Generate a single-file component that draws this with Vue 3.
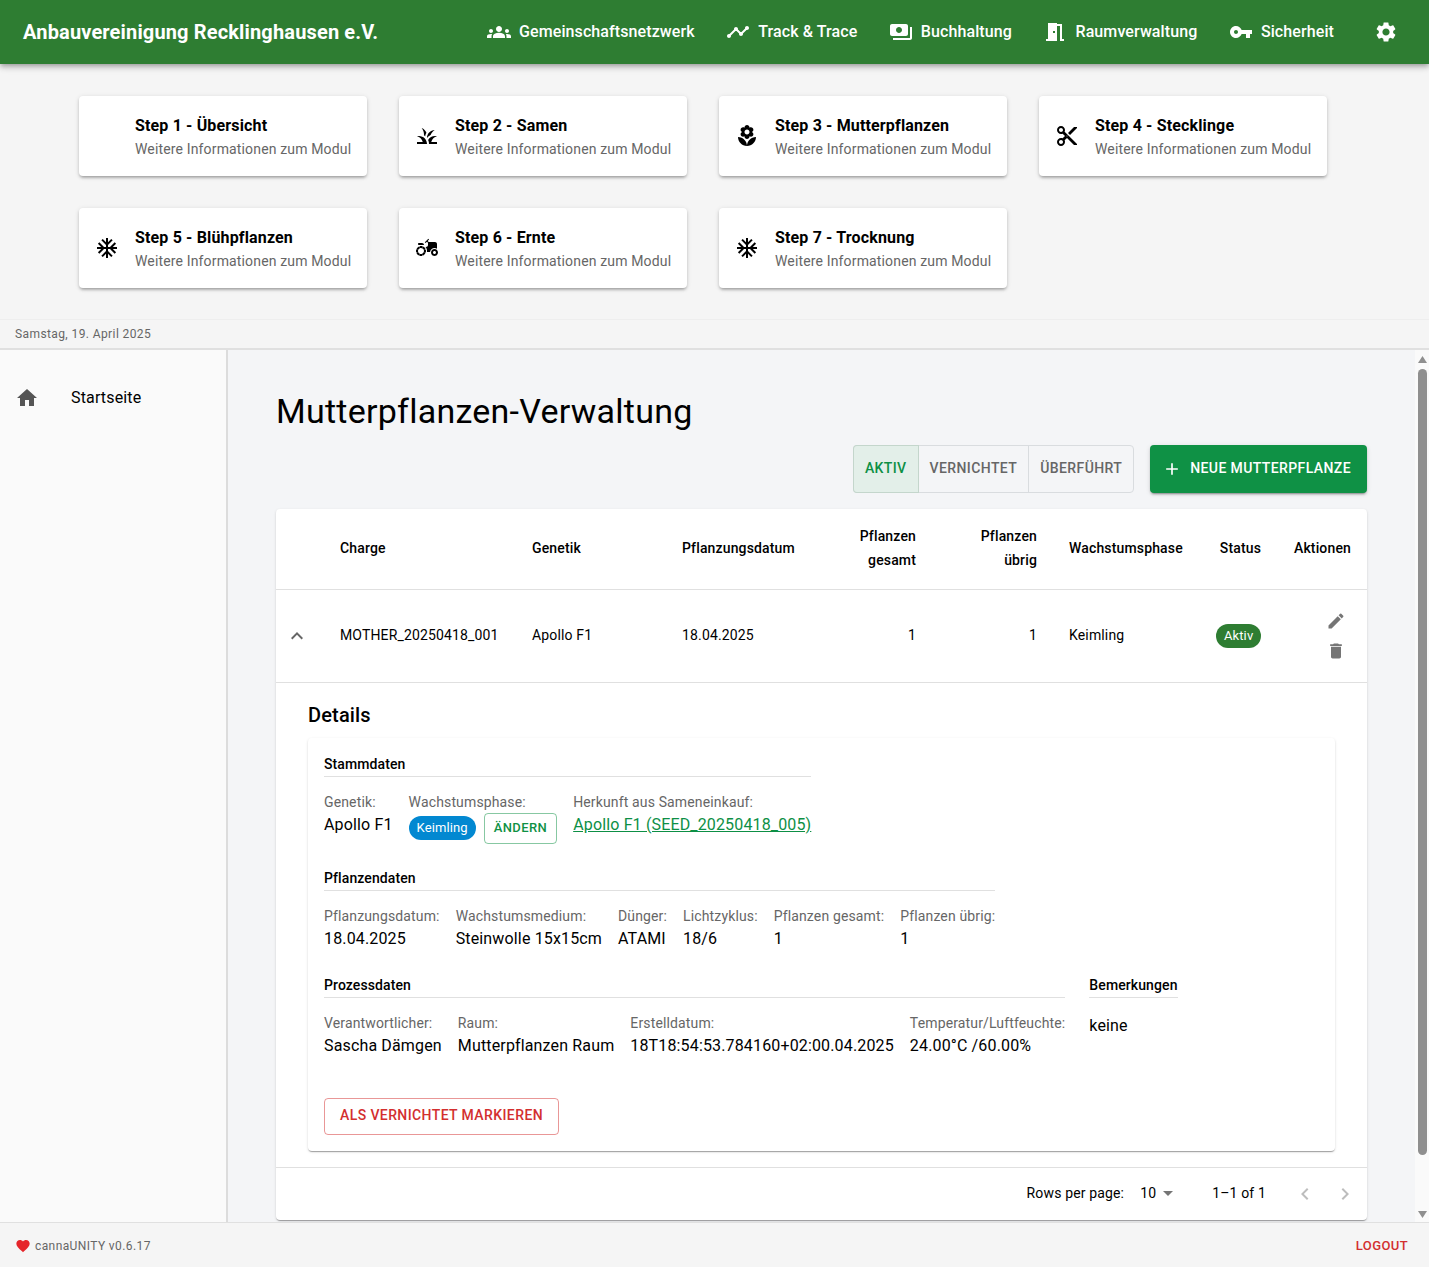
<script setup>
const icons = {
  groups: 'M12 12.75c1.63 0 3.07.39 4.24.9 1.08.48 1.76 1.56 1.76 2.73V18H6v-1.61c0-1.18.68-2.26 1.76-2.73 1.17-.52 2.61-.91 4.24-.91zM4 13c1.1 0 2-.9 2-2s-.9-2-2-2-2 .9-2 2 .9 2 2 2zm1.13 1.1c-.37-.06-.74-.1-1.13-.1-.99 0-1.93.21-2.78.58C.48 14.9 0 15.62 0 16.43V18h4.5v-1.61c0-.83.23-1.61.63-2.29zM20 13c1.1 0 2-.9 2-2s-.9-2-2-2-2 .9-2 2 .9 2 2 2zm4 3.43c0-.81-.48-1.53-1.22-1.85-.85-.37-1.79-.58-2.78-.58-.39 0-.76.04-1.13.1.4.68.63 1.46.63 2.29V18H24v-1.57zM12 6c1.66 0 3 1.34 3 3s-1.34 3-3 3-3-1.34-3-3 1.34-3 3-3z',
  timeline: 'M23 8c0 1.1-.9 2-2 2-.18 0-.35-.02-.51-.07l-3.56 3.55c.05.16.07.34.07.52 0 1.1-.9 2-2 2s-2-.9-2-2c0-.18.02-.36.07-.52l-2.55-2.55c-.16.05-.34.07-.52.07s-.36-.02-.52-.07l-4.55 4.56c.05.16.07.33.07.51 0 1.1-.9 2-2 2s-2-.9-2-2 .9-2 2-2c.18 0 .35.02.51.07l4.56-4.55C8.02 9.36 8 9.18 8 9c0-1.1.9-2 2-2s2 .9 2 2c0 .18-.02.36-.07.52l2.55 2.55c.16-.05.34-.07.52-.07s.36.02.52.07l3.55-3.56C19.02 8.35 19 8.18 19 8c0-1.1.9-2 2-2s2 .9 2 2z',
  payments: 'M19 14V6c0-1.1-.9-2-2-2H3c-1.1 0-2 .9-2 2v8c0 1.1.9 2 2 2h14c1.1 0 2-.9 2-2zm-9-1c-1.66 0-3-1.34-3-3s1.34-3 3-3 3 1.34 3 3-1.34 3-3 3zm13-6v11c0 1.1-.9 2-2 2H4v-2h17V7h2z',
  room: 'M14 6v15H3v-2h2V3h9v1h5v15h2v2h-4V6h-3zm-4 5v2h2v-2h-2z',
  key: 'M12.65 10C11.83 7.67 9.61 6 7 6c-3.31 0-6 2.69-6 6s2.69 6 6 6c2.61 0 4.83-1.67 5.65-4H17v4h4v-4h2v-4H12.65zM7 14c-1.1 0-2-.9-2-2s.9-2 2-2 2 .9 2 2-.9 2-2 2z',
  settings: 'M19.14 12.94c.04-.3.06-.61.06-.94 0-.32-.02-.64-.07-.94l2.03-1.58c.18-.14.23-.41.12-.61l-1.92-3.32c-.12-.22-.37-.29-.59-.22l-2.39.96c-.5-.38-1.03-.7-1.62-.94l-.36-2.54c-.04-.24-.24-.41-.48-.41h-3.84c-.24 0-.43.17-.47.41l-.36 2.54c-.59.24-1.13.57-1.62.94l-2.39-.96c-.22-.08-.47 0-.59.22L2.74 8.87c-.12.21-.08.47.12.61l2.03 1.58c-.05.3-.09.63-.09.94s.02.64.07.94l-2.03 1.58c-.18.14-.23.41-.12.61l1.92 3.32c.12.22.37.29.59.22l2.39-.96c.5.38 1.03.7 1.62.94l.36 2.54c.05.24.24.41.48.41h3.84c.24 0 .44-.17.47-.41l.36-2.54c.59-.24 1.13-.56 1.62-.94l2.39.96c.22.08.47 0 .59-.22l1.92-3.32c.12-.22.07-.47-.12-.61l-2.01-1.58zM12 15.6c-1.98 0-3.6-1.62-3.6-3.6s1.62-3.6 3.6-3.6 3.6 1.62 3.6 3.6-1.62 3.6-3.6 3.6z',
  grass: 'M12,20H2v-2h5.75l0,0C7.02,15.19,4.81,12.99,2,12.26C2.64,12.1,3.31,12,4,12C8.42,12,12,15.58,12,20z M22,12.26C21.36,12.1,20.69,12,20,12c-2.93,0-5.48,1.58-6.88,3.93c0.29,0.66,0.53,1.35,0.67,2.07c0.13,0.65,0.2,1.32,0.2,2h2h6v-2h-5.75C16.98,15.19,19.19,12.99,22,12.26z M15.64,11.02c0.78-2.09,2.23-3.84,4.09-5C15.44,6.16,12,9.67,12,14c0,0.01,0,0.02,0,0.02C12.95,12.75,14.2,11.72,15.64,11.02z M11.42,8.85C10.58,6.66,8.88,4.89,6.7,4C8.14,5.86,9,8.18,9,10.71c0,0.21-0.03,0.41-0.04,0.61c0.43,0.24,0.83,0.52,1.22,0.82C10.39,10.96,10.85,9.85,11.42,8.85z',
  florist: 'M12 22c4.97 0 9-4.03 9-9-4.97 0-9 4.03-9 9zM5.6 10.25c0 1.38 1.12 2.5 2.5 2.5.53 0 1.01-.16 1.42-.44l-.02.19c0 1.38 1.12 2.5 2.5 2.5s2.5-1.12 2.5-2.5l-.02-.19c.4.28.89.44 1.42.44 1.38 0 2.5-1.12 2.5-2.5 0-1-.59-1.85-1.43-2.25.84-.4 1.43-1.25 1.43-2.25 0-1.38-1.12-2.5-2.5-2.5-.53 0-1.01.16-1.42.44l.02-.19C14.5 2.12 13.38 1 12 1S9.5 2.12 9.5 3.5l.02.19c-.4-.28-.89-.44-1.42-.44-1.38 0-2.5 1.12-2.5 2.5 0 1 .59 1.85 1.43 2.25-.84.4-1.43 1.25-1.43 2.25zM12 5.5c1.38 0 2.5 1.12 2.5 2.5s-1.12 2.5-2.5 2.5S9.5 9.38 9.5 8s1.12-2.5 2.5-2.5zM3 13c0 4.97 4.03 9 9 9 0-4.97-4.03-9-9-9z',
  cut: 'M9.64 7.64c.23-.5.36-1.05.36-1.64 0-2.21-1.79-4-4-4S2 3.79 2 6s1.79 4 4 4c.59 0 1.14-.13 1.64-.36L10 12l-2.36 2.36C7.14 14.13 6.59 14 6 14c-2.21 0-4 1.79-4 4s1.79 4 4 4 4-1.79 4-4c0-.59-.13-1.14-.36-1.64L12 14l7 7h3v-1L9.64 7.64zM6 8c-1.1 0-2-.89-2-2s.9-2 2-2 2 .89 2 2-.9 2-2 2zm0 12c-1.1 0-2-.89-2-2s.9-2 2-2 2 .89 2 2-.9 2-2 2zm6-7.5c-.28 0-.5-.22-.5-.5s.22-.5.5-.5.5.22.5.5-.22.5-.5.5zM19 3l-6 6 2 2 7-7V3z',
  snow: 'M22 11h-4.17l3.24-3.24-1.41-1.42L15 11h-2V9l4.66-4.66-1.42-1.41L13 6.17V2h-2v4.17L7.76 2.93 6.34 4.34 11 9v2H9L4.34 6.34 2.93 7.76 6.17 11H2v2h4.17l-3.24 3.24 1.41 1.42L9 13h2v2l-4.66 4.66 1.42 1.41L11 17.83V22h2v-4.17l3.24 3.24 1.42-1.41L13 15v-2h2l4.66 4.66 1.41-1.42L17.83 13H22z',
  tractor: 'M19.5 12c.93 0 1.78.28 2.5.76V8c0-1.1-.9-2-2-2h-6.29l-1.06-1.06 1.41-1.41-.71-.71-3.53 3.53.71.71 1.41-1.41L13 6.71V9c0 1.1-.9 2-2 2h-.54c.95 1.06 1.54 2.46 1.54 4 0 .34-.04.67-.09 1h3.14c.25-2.25 2.14-4 4.45-4zM19.5 13c-1.93 0-3.5 1.57-3.5 3.5s1.57 3.5 3.5 3.5 3.5-1.57 3.5-3.5-1.57-3.5-3.5-3.5zm0 5c-.83 0-1.5-.67-1.5-1.5s.67-1.5 1.5-1.5 1.5.67 1.5 1.5-.67 1.5-1.5 1.5zM4 9h5c0-1.1-.9-2-2-2H4c-.55 0-1 .45-1 1s.45 1 1 1zM9.83,13.82l-0.18-0.47L10.58,13c-0.46-1.06-1.28-1.91-2.31-2.43l-0.4,0.89l-0.46-0.21l0.4-0.9C7.26,10.13,6.64,10,6,10C5.47,10,4.96,10.1,4.48,10.26l0.34,0.91l-0.47,0.18L4,10.42c-1.06,0.46-1.91,1.28-2.43,2.31l0.89,0.4l-0.21,0.46l-0.9-0.4C1.13,13.74,1,14.36,1,15c0,0.53,0.1,1.04,0.26,1.52l0.91-0.34l0.18,0.47L1.42,17c0.46,1.06,1.28,1.91,2.31,2.43l0.4-0.89l0.46,0.21l-0.4,0.9C4.74,19.87,5.36,20,6,20c0.53,0,1.04-0.1,1.52-0.26l-0.34-0.91l0.47-0.18L8,19.58c1.06-0.46,1.91-1.28,2.43-2.31l-0.89-0.4l0.21-0.46l0.9,0.4C10.87,16.26,11,15.64,11,15c0-0.53-0.1-1.04-0.26-1.52L9.83,13.82z M7.15,17.77c-1.53,0.63-3.29-0.09-3.92-1.62c-0.63-1.53,0.09-3.29,1.62-3.92c1.53-0.63,3.29,0.09,3.92,1.62C9.41,15.38,8.68,17.14,7.15,17.77z',
  edit: 'M3 17.25V21h3.75L17.81 9.94l-3.75-3.75L3 17.25zM20.71 7.04c.39-.39.39-1.02 0-1.41l-2.34-2.34a.9959.9959 0 0 0-1.41 0l-1.83 1.83 3.75 3.75 1.83-1.83z',
  trash: 'M6 19c0 1.1.9 2 2 2h8c1.1 0 2-.9 2-2V7H6v12zM19 4h-3.5l-1-1h-5l-1 1H5v2h14V4z',
  up: 'M7.41 15.41 12 10.83l4.59 4.58L18 14l-6-6-6 6z',
  home: 'M10 20v-6h4v6h5v-8h3L12 3 2 12h3v8z',
  heart: 'm12 21.35-1.45-1.32C5.4 15.36 2 12.28 2 8.5 2 5.42 4.42 3 7.5 3c1.74 0 3.41.81 4.5 2.09C13.09 3.81 14.76 3 16.5 3 19.58 3 22 5.42 22 8.5c0 3.78-3.4 6.86-8.55 11.54L12 21.35z',
  left: 'M15.41 16.59 10.83 12l4.58-4.59L14 6l-6 6 6 6z',
  right: 'M8.59 16.59 13.17 12 8.59 7.41 10 6l6 6-6 6z',
  drop: 'm7 10 5 5 5-5z',
  add: 'M19 13h-6v6h-2v-6H5v-2h6V5h2v6h6v2z'
}

const navItems = [
  { label: 'Gemeinschaftsnetzwerk', icon: 'groups' },
  { label: 'Track & Trace', icon: 'timeline' },
  { label: 'Buchhaltung', icon: 'payments' },
  { label: 'Raumverwaltung', icon: 'room' },
  { label: 'Sicherheit', icon: 'key' }
]

const steps = [
  { title: 'Step 1 - Übersicht', icon: null },
  { title: 'Step 2 - Samen', icon: 'grass' },
  { title: 'Step 3 - Mutterpflanzen', icon: 'florist' },
  { title: 'Step 4 - Stecklinge', icon: 'cut' },
  { title: 'Step 5 - Blühpflanzen', icon: 'snow' },
  { title: 'Step 6 - Ernte', icon: 'tractor' },
  { title: 'Step 7 - Trocknung', icon: 'snow' }
]

const plantFields = [
  { label: 'Pflanzungsdatum:', value: '18.04.2025' },
  { label: 'Wachstumsmedium:', value: 'Steinwolle 15x15cm' },
  { label: 'Dünger:', value: 'ATAMI' },
  { label: 'Lichtzyklus:', value: '18/6' },
  { label: 'Pflanzen gesamt:', value: '1' },
  { label: 'Pflanzen übrig:', value: '1' }
]

const processFields = [
  { label: 'Verantwortlicher:', value: 'Sascha Dämgen' },
  { label: 'Raum:', value: 'Mutterpflanzen Raum' },
  { label: 'Erstelldatum:', value: '18T18:54:53.784160+02:00.04.2025' },
  { label: 'Temperatur/Luftfeuchte:', value: '24.00°C /60.00%' }
]
</script>

<template>
  <div class="page">
    <header class="topbar">
      <div class="brand">Anbauvereinigung Recklinghausen e.V.</div>
      <nav class="topnav">
        <a v-for="item in navItems" :key="item.label" class="navlink">
          <svg class="ic24" viewBox="0 0 24 24"><path :d="icons[item.icon]" /></svg>
          <span>{{ item.label }}</span>
        </a>
        <svg class="ic24 gear" viewBox="0 0 24 24"><path :d="icons.settings" /></svg>
      </nav>
    </header>

    <section class="steps">
      <div v-for="step in steps" :key="step.title" class="step-card">
        <div class="step-icon">
          <svg v-if="step.icon" class="ic24" viewBox="0 0 24 24"><path :d="icons[step.icon]" /></svg>
        </div>
        <div class="step-text">
          <div class="step-title">{{ step.title }}</div>
          <div class="step-sub">Weitere Informationen zum Modul</div>
        </div>
      </div>
    </section>

    <div class="datebar">Samstag, 19. April 2025</div>

    <div class="workspace">
      <aside class="sidebar">
        <div class="side-item">
          <svg class="ic24" viewBox="0 0 24 24"><path :d="icons.home" /></svg>
          <span>Startseite</span>
        </div>
      </aside>

      <main class="content">
        <h1 class="page-title">Mutterpflanzen-Verwaltung</h1>

        <div class="toolbar">
          <div class="toggle">
            <button class="toggle-btn active">AKTIV</button>
            <button class="toggle-btn">VERNICHTET</button>
            <button class="toggle-btn">ÜBERFÜHRT</button>
          </div>
          <button class="new-btn">
            <svg viewBox="0 0 24 24"><path :d="icons.add" /></svg>
            NEUE MUTTERPFLANZE
          </button>
        </div>

        <div class="table-card">
          <table class="plants">
            <colgroup>
              <col style="width: 48px" />
              <col style="width: 192px" />
              <col style="width: 150px" />
              <col style="width: 145px" />
              <col style="width: 121px" />
              <col style="width: 121px" />
              <col style="width: 147px" />
              <col style="width: 77px" />
              <col style="width: 90px" />
            </colgroup>
            <thead>
              <tr>
                <th></th>
                <th>Charge</th>
                <th>Genetik</th>
                <th>Pflanzungsdatum</th>
                <th class="num">Pflanzen<br />gesamt</th>
                <th class="num">Pflanzen<br />übrig</th>
                <th>Wachstumsphase</th>
                <th class="num">Status</th>
                <th class="num">Aktionen</th>
              </tr>
            </thead>
            <tbody>
              <tr>
                <td class="expander">
                  <svg viewBox="0 0 24 24"><path :d="icons.up" /></svg>
                </td>
                <td>MOTHER_20250418_001</td>
                <td>Apollo F1</td>
                <td>18.04.2025</td>
                <td class="num">1</td>
                <td class="num">1</td>
                <td>Keimling</td>
                <td class="num status"><span class="status-chip">Aktiv</span></td>
                <td class="num actions">
                  <span class="icon-btn"><svg viewBox="0 0 24 24"><path :d="icons.edit" /></svg></span>
                  <span class="icon-btn"><svg viewBox="0 0 24 24"><path :d="icons.trash" /></svg></span>
                </td>
              </tr>
              <tr>
                <td colspan="9" class="details-cell">
                  <h2 class="details-title">Details</h2>
                  <div class="details-card">
                    <div class="group">
                      <h3 class="group-title">Stammdaten</h3>
                      <div class="fields">
                        <div class="field">
                          <div class="label">Genetik:</div>
                          <div class="value">Apollo F1</div>
                        </div>
                        <div class="field">
                          <div class="label">Wachstumsphase:</div>
                          <div class="phase">
                            <span class="phase-chip">Keimling</span>
                            <button class="change-btn">ÄNDERN</button>
                          </div>
                        </div>
                        <div class="field">
                          <div class="label">Herkunft aus Sameneinkauf:</div>
                          <a class="value seed-link">Apollo F1 (SEED_20250418_005)</a>
                        </div>
                      </div>
                    </div>

                    <div class="group">
                      <h3 class="group-title">Pflanzendaten</h3>
                      <div class="fields">
                        <div v-for="f in plantFields" :key="f.label" class="field">
                          <div class="label">{{ f.label }}</div>
                          <div class="value">{{ f.value }}</div>
                        </div>
                      </div>
                    </div>

                    <div class="group-row">
                      <div class="group">
                        <h3 class="group-title">Prozessdaten</h3>
                        <div class="fields">
                          <div v-for="f in processFields" :key="f.label" class="field">
                            <div class="label">{{ f.label }}</div>
                            <div class="value">{{ f.value }}</div>
                          </div>
                        </div>
                      </div>
                      <div class="group">
                        <h3 class="group-title">Bemerkungen</h3>
                        <div class="value note">keine</div>
                      </div>
                    </div>

                    <button class="destroy-btn">ALS VERNICHTET MARKIEREN</button>
                  </div>
                </td>
              </tr>
            </tbody>
          </table>

          <div class="pagination">
            <span>Rows per page:</span>
            <span class="per-page">10<svg viewBox="0 0 24 24"><path :d="icons.drop" /></svg></span>
            <span class="range">1–1 of 1</span>
            <svg class="page-arrow first" viewBox="0 0 24 24"><path :d="icons.left" /></svg>
            <svg class="page-arrow" viewBox="0 0 24 24"><path :d="icons.right" /></svg>
          </div>
        </div>

        <div class="scrollbar">
          <span class="sb-arrow sb-up"></span>
          <span class="sb-thumb"></span>
          <span class="sb-arrow sb-down"></span>
        </div>
      </main>
    </div>

    <footer class="footer">
      <div class="version">
        <svg viewBox="0 0 24 24"><path :d="icons.heart" /></svg>
        cannaUNITY v0.6.17
      </div>
      <a class="logout">LOGOUT</a>
    </footer>
  </div>
</template>

<style scoped>
.page {
  height: 1267px;
  display: flex;
  flex-direction: column;
  overflow: hidden;
  background: #f5f5f5;
  font-family: Roboto, "Liberation Sans", sans-serif;
  color: #000;
}

.ic24 {
  width: 24px;
  height: 24px;
  fill: currentColor;
  flex: none;
}

/* top bar */
.topbar {
  height: 64px;
  flex: none;
  display: flex;
  align-items: center;
  justify-content: space-between;
  padding: 0 31px 0 23px;
  background: #2e7d32;
  color: #fff;
  box-shadow: 0 2px 4px -1px rgba(0, 0, 0, 0.2), 0 4px 5px 0 rgba(0, 0, 0, 0.14), 0 1px 10px 0 rgba(0, 0, 0, 0.12);
  position: relative;
}

.brand {
  font-size: 20px;
  font-weight: 700;
  letter-spacing: 0.15px;
}

.topnav {
  display: flex;
  align-items: center;
}

.navlink {
  display: flex;
  align-items: center;
  gap: 8px;
  margin-right: 31.5px;
  font-size: 16px;
  font-weight: 500;
  letter-spacing: 0.1px;
}

.navlink span {
  padding-bottom: 2px;
}

.gear {
  margin-left: 8.5px;
}

/* step cards */
.steps {
  flex: none;
  height: 256px;
  box-sizing: border-box;
  padding: 32px 0 0 79px;
  display: grid;
  grid-template-columns: repeat(4, 288px);
  grid-auto-rows: 80px;
  gap: 32px;
  border-bottom: 1px solid #eeeeee;
}

.step-card {
  display: flex;
  align-items: center;
  gap: 16px;
  padding: 0 16px;
  background: #fff;
  border-radius: 4px;
  box-shadow: 0 3px 3px -2px rgba(0, 0, 0, 0.2), 0 2px 3px 0 rgba(0, 0, 0, 0.14), 0 1px 5px 0 rgba(0, 0, 0, 0.12);
}

.step-icon {
  width: 24px;
  height: 24px;
  flex: none;
}

.step-text {
  padding-top: 2px;
}

.step-title {
  padding-top: 1px;
  font-size: 16px;
  font-weight: 700;
  line-height: 24px;
  letter-spacing: 0.15px;
}

.step-sub {
  font-size: 14px;
  line-height: 23px;
  letter-spacing: 0.15px;
  color: #666;
  white-space: nowrap;
}

.datebar {
  flex: none;
  height: 30px;
  line-height: 28px;
  box-sizing: border-box;
  padding-left: 15px;
  font-size: 12px;
  letter-spacing: 0.4px;
  color: #666;
  border-bottom: 2px solid #e0e0e0;
}

/* sidebar + main */
.workspace {
  flex: 1;
  min-height: 0;
  display: flex;
}

.sidebar {
  width: 226px;
  flex: none;
  background: #fafafa;
  border-right: 2px solid #dcdcdc;
}

.side-item {
  display: flex;
  align-items: center;
  height: 48px;
  margin-top: 24px;
  padding-left: 15px;
  font-size: 16px;
  letter-spacing: 0.15px;
  color: #555;
}

.side-item span {
  margin-left: 32px;
  padding-bottom: 2px;
  color: #000;
}

.content {
  flex: 1;
  min-width: 0;
  position: relative;
  overflow: hidden;
  box-sizing: border-box;
  padding: 40px 62px 0 48px;
  background: #f4f5f7;
}

/* scrollbars are hidden in the capture browser, so this one is drawn */
.scrollbar {
  position: absolute;
  top: 0;
  right: 0;
  bottom: 0;
  width: 14px;
  display: flex;
  flex-direction: column;
  align-items: center;
  padding: 6px 0 0 1px;
  box-sizing: border-box;
  background: #fafafa;
}

.sb-arrow {
  width: 9px;
  height: 7px;
  background: #8f8f8f;
}

.sb-up {
  clip-path: polygon(50% 0, 100% 100%, 0 100%);
}

.sb-down {
  margin-top: 56px;
  clip-path: polygon(0 0, 100% 0, 50% 100%);
}

.sb-thumb {
  width: 9px;
  height: 786px;
  margin-top: 6px;
  background: #8f8f8f;
  border-radius: 5px;
}

.page-title {
  margin: 0;
  font-size: 34px;
  font-weight: 400;
  line-height: 42px;
  letter-spacing: 0.25px;
}

.toolbar {
  display: flex;
  justify-content: flex-end;
  gap: 16px;
  margin-top: 13px;
}

.toggle {
  display: flex;
  height: 48px;
  box-sizing: border-box;
  border: 1px solid #d9dcdf;
  border-radius: 4px;
}

.toggle-btn {
  padding: 0 11px 2px;
  background: none;
  border: none;
  border-left: 1px solid #d9dcdf;
  font: 500 14px Roboto, sans-serif;
  letter-spacing: 0.4px;
  color: #666;
}

.toggle-btn:first-child {
  border-left: none;
}

.toggle-btn.active {
  background: #e3efe9;
  color: #0d8f45;
  border-radius: 3px 0 0 3px;
  box-shadow: 0 0 0 1px #c4d6cc;
}

.toggle-btn.active + .toggle-btn {
  border-left: none;
  margin-left: 1px;
}

.new-btn {
  display: flex;
  align-items: center;
  gap: 8px;
  height: 48px;
  padding: 0 16px 2px 12px;
  background: #0f9145;
  color: #fff;
  border: none;
  border-radius: 4px;
  font: 500 14px Roboto, sans-serif;
  letter-spacing: 0.4px;
  box-shadow: 0 3px 1px -2px rgba(0, 0, 0, 0.2), 0 2px 2px 0 rgba(0, 0, 0, 0.14), 0 1px 5px 0 rgba(0, 0, 0, 0.12);
}

.new-btn svg {
  width: 20px;
  height: 20px;
  margin-top: 2px;
  fill: #fff;
}

/* table */
.table-card {
  margin-top: 16px;
  background: #fff;
  border-radius: 4px;
  box-shadow: 0 2px 1px -1px rgba(0, 0, 0, 0.2), 0 1px 1px 0 rgba(0, 0, 0, 0.14), 0 1px 3px 0 rgba(0, 0, 0, 0.12);
}

.plants {
  width: 100%;
  table-layout: fixed;
  border-collapse: collapse;
  font-size: 14px;
  letter-spacing: 0.15px;
}

.plants th {
  height: 80px;
  padding: 0 16px 2px;
  box-sizing: border-box;
  font-weight: 500;
  line-height: 24px;
  text-align: left;
  border-bottom: 1px solid #e0e0e0;
  white-space: nowrap;
}

.plants td {
  padding: 16px;
  border-bottom: 1px solid #e0e0e0;
  line-height: 20px;
  white-space: nowrap;
}

.plants tbody tr:first-child td:not(.actions):not(.expander):not(.status) {
  padding-bottom: 18px;
}

.plants .num {
  text-align: right;
}

.plants .expander {
  padding: 0 0 0 9px;
}

.expander svg {
  display: block;
  width: 24px;
  height: 24px;
  fill: #666;
}

.status-chip {
  display: inline-block;
  height: 24px;
  line-height: 24px;
  padding: 0 8px;
  border-radius: 12px;
  background: #2e7d32;
  color: #fff;
  font-size: 13px;
  font-weight: 400;
  letter-spacing: 0.1px;
  vertical-align: middle;
}

.icon-btn {
  display: block;
  width: 30px;
  height: 30px;
  margin-left: auto;
  padding: 5px;
  box-sizing: border-box;
}

.icon-btn svg {
  display: block;
  width: 20px;
  height: 20px;
  fill: #757575;
}

/* details */
.plants .details-cell {
  padding: 20px 32px 16px;
}

.details-title {
  margin: 0 0 11px;
  font-size: 20px;
  font-weight: 500;
  line-height: 24px;
}

.details-card {
  padding: 16px;
  border-radius: 4px;
  box-shadow: 0 2px 1px -1px rgba(0, 0, 0, 0.2), 0 1px 1px 0 rgba(0, 0, 0, 0.14), 0 1px 3px 0 rgba(0, 0, 0, 0.12);
}

.group {
  width: fit-content;
  margin-bottom: 24px;
}

.group-row {
  display: flex;
  gap: 24px;
}

.group-title {
  margin: 0 0 16px;
  padding-bottom: 2px;
  border-bottom: 1px solid #e0e0e0;
  font-size: 14px;
  font-weight: 500;
  line-height: 20px;
  letter-spacing: 0.1px;
}

.fields {
  display: flex;
  gap: 16px;
}

.label {
  margin-top: -1px;
  padding-bottom: 1px;
  font-size: 14px;
  line-height: 20px;
  letter-spacing: 0.14px;
  color: #666;
}

.value {
  display: block;
  font-size: 16px;
  line-height: 24px;
}

.seed-link {
  color: #0d8f45;
  text-decoration: underline;
}

.phase {
  display: flex;
  align-items: center;
  gap: 8px;
}

.phase-chip {
  height: 24px;
  line-height: 24px;
  padding: 0 8px;
  border-radius: 12px;
  background: #0288d1;
  color: #fff;
  font-size: 13px;
  font-weight: 400;
  letter-spacing: 0.1px;
}

.change-btn {
  height: 31px;
  padding: 0 9px 2px;
  background: none;
  border: 1px solid rgba(15, 145, 69, 0.5);
  border-radius: 4px;
  color: #0f9145;
  font: 500 13px Roboto, sans-serif;
  letter-spacing: 0.4px;
}

.destroy-btn {
  display: block;
  height: 37px;
  margin-top: 16px;
  padding: 0 15px 2px;
  background: none;
  border: 1px solid rgba(211, 47, 47, 0.5);
  border-radius: 4px;
  color: #d32f2f;
  font: 500 14px Roboto, sans-serif;
  letter-spacing: 0.4px;
}

/* pagination */
.pagination {
  display: flex;
  align-items: center;
  justify-content: flex-end;
  height: 52px;
  padding-right: 10px;
  font-size: 14px;
  letter-spacing: 0.15px;
}

.pagination > span {
  padding-bottom: 2px;
}

.per-page {
  display: flex;
  align-items: center;
  margin-left: 16px;
}

.per-page svg {
  width: 24px;
  height: 24px;
  fill: #757575;
}

.range {
  margin: 0 27px 0 32px;
}

.page-arrow {
  width: 24px;
  height: 24px;
  fill: #bdbdbd;
  margin-left: 16px;
}

.page-arrow.first {
  margin-left: 0;
}

/* footer */
.footer {
  flex: none;
  height: 45px;
  display: flex;
  align-items: center;
  justify-content: space-between;
  padding: 0 21px 0 15px;
  border-top: 1px solid #e0e0e0;
  box-sizing: border-box;
  position: relative;
}

.version {
  display: flex;
  align-items: center;
  gap: 4px;
  padding-top: 1px;
  font-size: 12px;
  letter-spacing: 0.4px;
  color: #666;
}

.version svg {
  width: 16px;
  height: 16px;
  fill: #e5252a;
}

.logout {
  padding-top: 1px;
  font-size: 13px;
  font-weight: 500;
  letter-spacing: 0.4px;
  color: #d32f2f;
}
</style>
